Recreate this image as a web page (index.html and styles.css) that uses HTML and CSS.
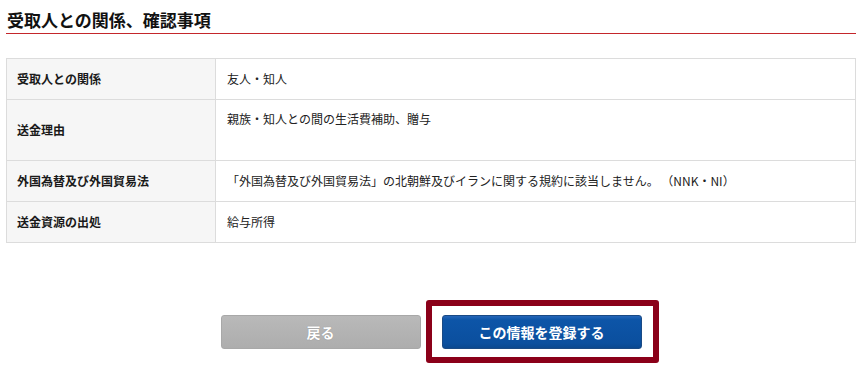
FILE: index.html
```html
<!DOCTYPE html>
<html lang="ja">
<head>
<meta charset="utf-8">
<title>受取人との関係、確認事項</title>
<link rel="stylesheet" href="styles.css">
</head>
<body>
<main class="page">
  <h2 class="section-title">受取人との関係、確認事項</h2>
  <table class="info-table">
    <tr>
      <th>受取人との関係</th>
      <td>友人・知人</td>
    </tr>
    <tr class="tall">
      <th>送金理由</th>
      <td class="top">親族・知人との間の生活費補助、贈与</td>
    </tr>
    <tr>
      <th>外国為替及び外国貿易法</th>
      <td>「外国為替及び外国貿易法」の北朝鮮及びイランに関する規約に該当しません。&nbsp;（NNK・NI）</td>
    </tr>
    <tr>
      <th>送金資源の出処</th>
      <td>給与所得</td>
    </tr>
  </table>
  <div class="actions">
    <button class="btn btn-back" type="button">戻る</button>
    <div class="highlight-wrap">
      <button class="btn btn-submit" type="button">この情報を登録する</button>
      <span class="highlight"></span>
    </div>
  </div>
</main>
</body>
</html>
```

FILE: styles.css
```css
* { box-sizing: border-box; }

html, body {
  margin: 0;
  padding: 0;
  background: #fff;
}

body {
  font-family: "Noto Sans CJK JP", "Noto Sans", "Liberation Sans", sans-serif;
  color: #222;
}

.page {
  padding: 0 6px 20px;
}

.section-title {
  margin: 0;
  padding: 9px 0 3px 1px;
  font-size: 17px;
  line-height: 21px;
  font-weight: bold;
  color: #111;
  border-bottom: 1px solid #c4262b;
}

.info-table {
  width: 100%;
  margin-top: 24px;
  border-collapse: collapse;
  font-size: 12px;
  line-height: 17px;
}

.info-table th,
.info-table td {
  border: 1px solid #dcdcdc;
  padding: 11px 10px 12px;
  vertical-align: middle;
  text-align: left;
}

.info-table th {
  width: 209px;
  background: #f6f6f6;
  font-weight: bold;
  color: #1a1a1a;
}

.info-table td {
  font-weight: normal;
  color: #222;
  padding-left: 11px;
}

.info-table .tall th,
.info-table .tall td {
  height: 61px;
}

.info-table td.top {
  vertical-align: top;
  padding-top: 10px;
}

.actions {
  display: flex;
  justify-content: center;
  align-items: flex-start;
  gap: 21px;
  margin-top: 72px;
}

.btn {
  display: block;
  width: 200px;
  height: 34px;
  border-radius: 3px;
  font-family: "Noto Sans CJK JP", "Noto Sans", sans-serif;
  font-size: 14px;
  line-height: 20px;
  font-weight: bold;
  color: #fff;
  cursor: pointer;
  padding: 0;
  margin: 0;
}

.btn-back {
  background: linear-gradient(#b9b9b9, #adadad);
  border: 1px solid #a8a8a8;
  text-shadow: 0 0 1px rgba(0,0,0,0.25);
}

.btn-submit {
  background: linear-gradient(#2666b8 0, #0d55a8 12%, #0b4f9e 85%, #0a4890 100%);
  border: 1px solid #1a4a85;
}

.highlight-wrap {
  position: relative;
}

.highlight {
  position: absolute;
  left: -16px;
  right: -17px;
  top: -15px;
  bottom: -14px;
  border: 6px solid #8b0019;
  border-radius: 3px;
  pointer-events: none;
}
```
